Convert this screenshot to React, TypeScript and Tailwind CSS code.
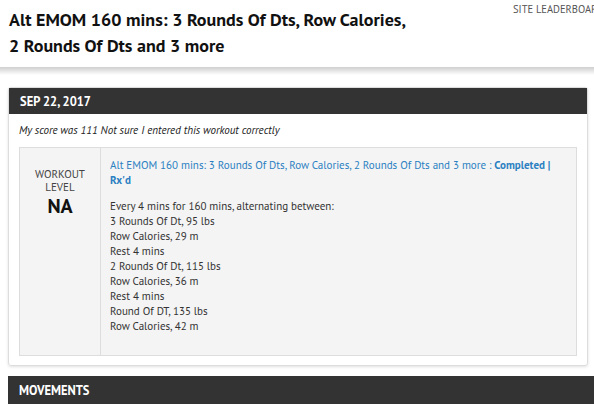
import React from 'react';

const font = { fontFamily: '"PT Sans", Roboto, "Liberation Sans", sans-serif' };

const lines = [
  'Every 4 mins for 160 mins, alternating between:',
  '3 Rounds Of Dt, 95 lbs',
  'Row Calories, 29 m',
  'Rest 4 mins',
  '2 Rounds Of Dt, 115 lbs',
  'Row Calories, 36 m',
  'Rest 4 mins',
  'Round Of DT, 135 lbs',
  'Row Calories, 42 m',
];

const App: React.FC = () => {
  return (
    <div className="w-[594px] h-[406px] overflow-hidden bg-white text-[#333]" style={font}>
      {/* page header */}
      <div className="h-[67px] flex">
        <h1 className="ml-[9px] mt-[7px] w-[404px] shrink-0 text-[18px] leading-[26px] font-bold text-[#111]">
          Alt EMOM 160 mins: 3 Rounds Of Dts, Row Calories, 2 Rounds Of Dts and 3 more
        </h1>
        <div className="ml-[100px] mt-[2px] shrink-0 whitespace-nowrap text-[10.5px] text-[#555]">SITE LEADERBOARD</div>
      </div>
      <div className="h-[8px] bg-gradient-to-b from-[#cfcfcf] to-white" />

      {/* score panel */}
      <div className="mt-[12px] ml-[8px] w-[580px] border border-[#ddd] rounded-[3px] shadow-[0_1px_3px_rgba(0,0,0,0.12)]">
        <div className="h-[26px] bg-[#333] px-[11px] flex items-center text-white text-[12.5px] font-bold">
          SEP 22, 2017
        </div>
        <div className="px-[10px] pt-[8px] pb-[9px]">
          <p className="italic text-[11px] leading-[16px] text-[#222]">
            My score was 111 Not sure I entered this workout correctly
          </p>
          <div className="mt-[9px] flex border border-[#ddd] bg-[#f4f4f4]">
            <div className="w-[81px] shrink-0 border-r border-[#ddd] pt-[20px] flex flex-col items-center text-center">
              <div className="text-[11px] leading-[13px] text-[#444]">
                WORKOUT
                <br />
                LEVEL
              </div>
              <div className="mt-[1px] text-[20px] leading-[22px] font-bold text-[#111]">NA</div>
            </div>
            <div className="flex-1 pl-[9px] pr-[10px] pt-[10px] pb-[21px] text-[11px] leading-[15px]">
              <div className="text-[#2b80c2]">
                Alt EMOM 160 mins: 3 Rounds Of Dts, Row Calories, 2 Rounds Of Dts and 3 more :{' '}
                <span className="font-bold">Completed | Rx'd</span>
              </div>
              <div className="mt-[11px]">
                {lines.map((l, i) => (
                  <div key={i}>{l}</div>
                ))}
              </div>
            </div>
          </div>
        </div>
      </div>

      {/* movements */}
      <div className="mt-[10px] ml-[8px] h-[28px] bg-[#333] px-[11px] flex items-center text-white text-[12.5px] font-bold">
        MOVEMENTS
      </div>
    </div>
  );
};

export default App;
